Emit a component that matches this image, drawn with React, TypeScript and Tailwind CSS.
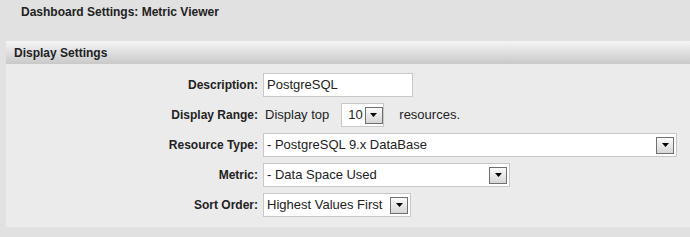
import React from 'react';

const font = "font-['Liberation_Sans',Arial,sans-serif]";

const Arrow = () => (
  <span className="flex h-[17px] w-[18px] shrink-0 items-center justify-center border border-[#707070] bg-gradient-to-b from-[#fbfbfb] to-[#d6d6d6]">
    <svg width="7" height="4" viewBox="0 0 7 4">
      <path d="M0 0H7L3.5 4Z" fill="#000" />
    </svg>
  </span>
);

const Select = ({ value, width, pad = 'pl-[3px]' }: { value: string; width: string; pad?: string }) => (
  <div className={`flex h-[24px] items-center justify-between gap-[2px] border border-[#c8c8c8] bg-white pr-[2px] ${pad} ${width}`}>
    <span className="whitespace-nowrap text-[13px] text-[#222]">{value}</span>
    <Arrow />
  </div>
);

const Label = ({ children }: { children: React.ReactNode }) => (
  <div className="flex h-[24px] items-center justify-end pr-[5px] text-[12px] font-bold text-[#222]">
    {children}
  </div>
);

export default function App() {
  return (
    <div className={`min-h-[237px] w-full bg-[#e1e1e1] ${font}`}>
      <div className="h-[41px] pl-[21px] pt-[3px] text-[12px] font-bold text-[#222]">
        Dashboard Settings: Metric Viewer
      </div>
      <div className="ml-[6px]">
        <div className="flex h-[23px] items-center bg-gradient-to-b from-[#f5f5f5] to-[#c9c9c9] pl-[8px] text-[12px] font-bold text-[#222]">
          Display Settings
        </div>
        <div className="grid grid-cols-[257px_1fr] gap-y-[6px] bg-[#ebebeb] pb-[10px] pt-[9px]">
          <Label>Description:</Label>
          <div className="flex h-[24px] w-[150px] items-center border border-[#c8c8c8] bg-white pl-[3px] text-[13px] text-[#222]">
            PostgreSQL
          </div>

          <Label>Display Range:</Label>
          <div className="flex h-[24px] items-center text-[13px] text-[#222]">
            <span className="ml-[2px]">Display top</span>
            <div className="ml-[12px]">
              <Select value="10" width="w-[43px]" pad="pl-[6px]" />
            </div>
            <span className="ml-[15px]">resources.</span>
          </div>

          <Label>Resource Type:</Label>
          <Select value="- PostgreSQL 9.x DataBase" width="w-[414px]" />

          <Label>Metric:</Label>
          <Select value="- Data Space Used" width="w-[247px]" />

          <Label>Sort Order:</Label>
          <Select value="Highest Values First" width="w-[148px]" />
        </div>
      </div>
    </div>
  );
}
